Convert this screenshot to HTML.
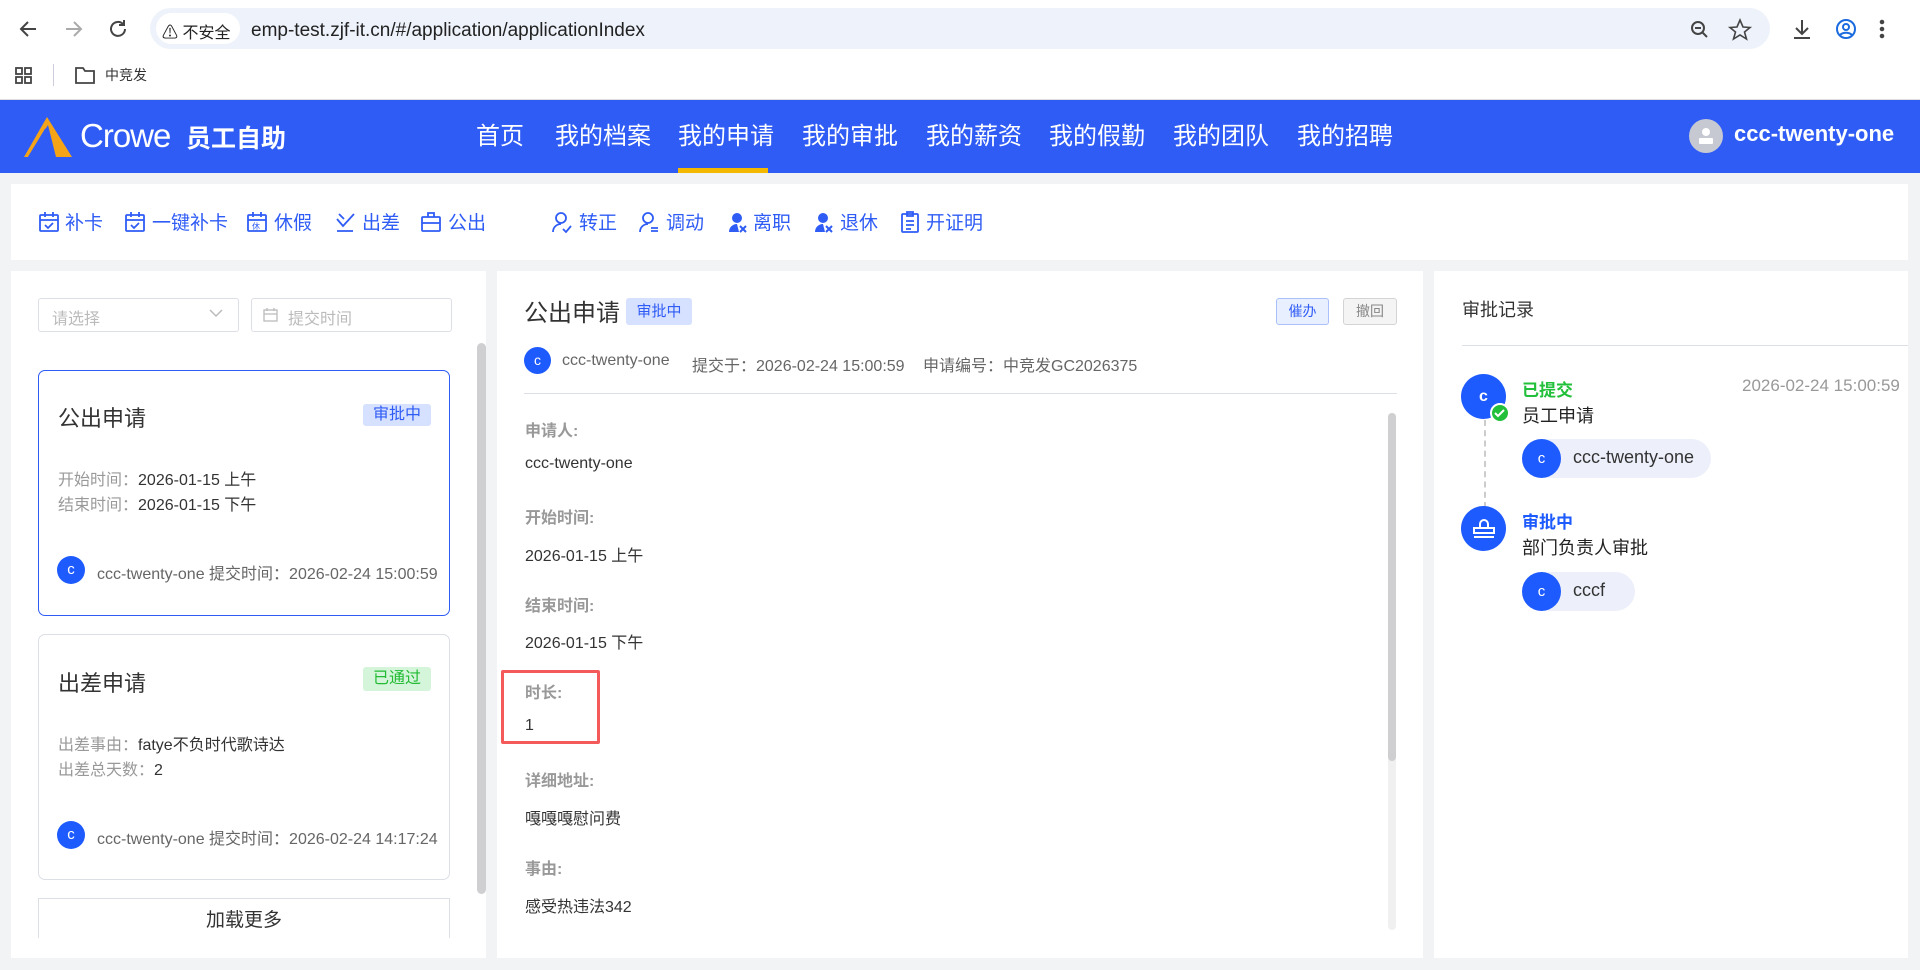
<!DOCTYPE html>
<html><head><meta charset="utf-8"><style>
*{margin:0;padding:0;box-sizing:border-box}
body{width:1920px;height:970px;overflow:hidden;background:#f2f3f5;font-family:"Liberation Sans","Noto Sans CJK SC",sans-serif;position:relative;color:#333}
.a{position:absolute;white-space:nowrap}
.nav{position:absolute;left:0;top:100px;width:1920px;height:73px;background:#2f5cf5}
.ni{position:absolute;top:116px;font-size:24px;color:#fff}
.tb{font-size:19px;color:#2f5cf5;top:208px}
.ic{position:absolute;top:211px}
.panel{position:absolute;background:#fff}
.lbl{position:absolute;left:525px;font-size:16px;color:#999;font-weight:bold}
.val{position:absolute;left:525px;font-size:16px;color:#333}
.av{position:absolute;border-radius:50%;background:#1e5bff;color:#fff;text-align:center;font-size:15px}
</style></head><body>
<!-- browser chrome -->
<div class="a" style="left:0;top:0;width:1920px;height:100px;background:#fff;border-bottom:1px solid #ddd"></div>
<svg class="a" style="left:16px;top:16px" width="120" height="26" viewBox="0 0 120 26" fill="none" stroke-width="2">
<path d="M20 13H6M12 6l-7 7 7 7" stroke="#444"/>
<path d="M50 13h14M58 6l7 7-7 7" stroke="#aaa"/>
<path d="M109 13a7 7 0 1 1-2-5" stroke="#444"/>
<path d="M108 4v5h-5" stroke="#444"/>
</svg>
<div class="a" style="left:150px;top:8px;width:1620px;height:41px;border-radius:21px;background:#eef2fa"></div>
<div class="a" style="left:156px;top:13px;width:84px;height:31px;border-radius:16px;background:#fff"></div>
<div class="a" style="left:162px;top:19px;font-size:16px;color:#222">⚠ 不安全</div>
<div class="a" style="left:251px;top:20px;font-size:19px;color:#222">emp-test.zjf-it.cn/#/application/applicationIndex</div>
<svg class="a" style="left:1688px;top:18px" width="200" height="24" viewBox="0 0 200 24" fill="none" stroke="#444" stroke-width="2">
<circle cx="10" cy="10" r="6"/><path d="M14 14l5 5M7 10h6"/>
<path d="M52 2l3 7 7 .5-5.5 4.5 2 7-6.5-4-6.5 4 2-7L42 9.5l7-.5z" stroke-width="1.6"/>
<path d="M114 2v13M108 10l6 6 6-6M106 20h16"/>
<circle cx="158" cy="11" r="9" stroke="#1a6be0"/><circle cx="158" cy="9" r="3" stroke="#1a6be0"/><path d="M152 17c3-3 9-3 12 0" stroke="#1a6be0"/>
<circle cx="194" cy="4" r="1.3" fill="#444"/><circle cx="194" cy="11" r="1.3" fill="#444"/><circle cx="194" cy="18" r="1.3" fill="#444"/>
</svg>
<svg class="a" style="left:14px;top:66px" width="20" height="20" fill="none" stroke="#444" stroke-width="1.8"><rect x="2" y="2" width="6" height="6"/><rect x="11" y="2" width="6" height="6"/><rect x="2" y="11" width="6" height="6"/><rect x="11" y="11" width="6" height="6"/></svg>
<div class="a" style="left:53px;top:64px;width:1px;height:22px;background:#ccd"></div>
<svg class="a" style="left:74px;top:65px" width="22" height="20" fill="none" stroke="#444" stroke-width="1.8"><path d="M2 3h7l2 3h9v12H2z"/></svg>
<div class="a" style="left:105px;top:65px;font-size:14px;color:#333">中竞发</div>
<!-- nav -->
<div class="nav"></div>
<svg class="a" style="left:22px;top:115px" width="52" height="44" viewBox="0 0 52 44"><path d="M25 2L2 42l4 0L26 10 34 42h16z" fill="#f5a418"/><path d="M7 42L24 14M13 42L26 20M19 42L28 26" stroke="#2f5cf5" stroke-width="2"/></svg>
<div class="a" style="left:80px;top:117px;font-size:33px;color:#fff;font-weight:300;letter-spacing:-1px">Crowe</div>
<div class="a" style="left:186px;top:119px;font-size:25px;color:#fff;font-weight:bold">员工自助</div>
<div class="ni" style="left:476px">首页</div>
<div class="ni" style="left:555px">我的档案</div>
<div class="ni" style="left:678px">我的申请</div>
<div class="a" style="left:678px;top:168px;width:90px;height:5px;background:#f5b800"></div>
<div class="ni" style="left:802px">我的审批</div>
<div class="ni" style="left:926px">我的薪资</div>
<div class="ni" style="left:1049px">我的假勤</div>
<div class="ni" style="left:1173px">我的团队</div>
<div class="ni" style="left:1297px">我的招聘</div>
<div class="a" style="left:1689px;top:119px;width:34px;height:34px;border-radius:50%;background:#c6c9d2"></div>
<svg class="a" style="left:1697px;top:126px" width="18" height="20"><circle cx="9" cy="6" r="4" fill="#fff"/><rect x="2" y="12" width="14" height="6" rx="1" fill="#fff"/></svg>
<div class="a" style="left:1734px;top:121px;font-size:22px;color:#fff;font-weight:bold">ccc-twenty-one</div>
<!-- toolbar -->
<div class="panel" style="left:11px;top:184px;width:1897px;height:76px"></div>
<svg class="ic" style="left:38px" width="22" height="22" fill="none" stroke="#2f5cf5" stroke-width="1.8"><rect x="2" y="4" width="18" height="16" rx="1"/><path d="M2 9h18M7 1v5M15 1v5M7 14l3 3 5-5"/></svg>
<div class="a tb" style="left:65px">补卡</div>
<svg class="ic" style="left:124px" width="22" height="22" fill="none" stroke="#2f5cf5" stroke-width="1.8"><rect x="2" y="4" width="18" height="16" rx="1"/><path d="M2 9h18M7 1v5M15 1v5M7 14l3 3 5-5"/></svg>
<div class="a tb" style="left:152px">一键补卡</div>
<svg class="ic" style="left:246px" width="22" height="22" fill="none" stroke="#2f5cf5" stroke-width="1.8"><rect x="2" y="4" width="18" height="16" rx="1"/><path d="M2 9h18M7 1v5M15 1v5"/><text x="6" y="18" font-size="8" fill="#2f5cf5" stroke="none">休</text></svg>
<div class="a tb" style="left:274px">休假</div>
<svg class="ic" style="left:334px" width="22" height="22" fill="none" stroke="#2f5cf5" stroke-width="1.8"><path d="M3 8l6 7L20 3M3 20h16M5 3l5 5"/></svg>
<div class="a tb" style="left:362px">出差</div>
<svg class="ic" style="left:420px" width="22" height="22" fill="none" stroke="#2f5cf5" stroke-width="1.8"><rect x="2" y="6" width="18" height="14" rx="1"/><path d="M8 6V2h6v4M2 12h18"/></svg>
<div class="a tb" style="left:448px">公出</div>
<svg class="ic" style="left:551px" width="22" height="22" fill="none" stroke="#2f5cf5" stroke-width="1.8"><circle cx="10" cy="7" r="5"/><path d="M2 21c0-5 4-8 8-8M12 18l3 3 5-6"/></svg>
<div class="a tb" style="left:579px">转正</div>
<svg class="ic" style="left:638px" width="22" height="22" fill="none" stroke="#2f5cf5" stroke-width="1.8"><circle cx="10" cy="7" r="5"/><path d="M2 21c0-5 4-8 8-8M13 17h7M13 20h7"/></svg>
<div class="a tb" style="left:666px">调动</div>
<svg class="ic" style="left:727px" width="22" height="22" fill="#2f5cf5"><circle cx="10" cy="7" r="5"/><path d="M2 21c0-5 4-8 8-8l2 8z"/><path d="M13 15l6 6M19 15l-6 6" stroke="#2f5cf5" stroke-width="2"/></svg>
<div class="a tb" style="left:753px">离职</div>
<svg class="ic" style="left:813px" width="22" height="22" fill="#2f5cf5"><circle cx="10" cy="7" r="5"/><path d="M2 21c0-5 4-8 8-8l2 8z"/><path d="M13 15l6 6M19 15l-6 6" stroke="#2f5cf5" stroke-width="2"/></svg>
<div class="a tb" style="left:840px">退休</div>
<svg class="ic" style="left:899px" width="22" height="22" fill="none" stroke="#2f5cf5" stroke-width="1.8"><rect x="3" y="3" width="16" height="18" rx="1"/><path d="M8 1h6v4H8zM7 10h8M7 14h8M7 18h5"/></svg>
<div class="a tb" style="left:926px">开证明</div>
<!-- left panel -->
<div class="panel" style="left:11px;top:271px;width:475px;height:687px"></div>
<div class="a" style="left:38px;top:298px;width:201px;height:34px;border:1px solid #dcdfe6;border-radius:3px"></div>
<div class="a" style="left:52px;top:305px;font-size:16px;color:#bbb">请选择</div>
<svg class="a" style="left:209px;top:308px" width="14" height="10" fill="none" stroke="#bbb" stroke-width="1.5"><path d="M1 2l6 6 6-6"/></svg>
<div class="a" style="left:251px;top:298px;width:201px;height:34px;border:1px solid #dcdfe6;border-radius:3px"></div>
<svg class="a" style="left:263px;top:308px" width="15" height="14" fill="none" stroke="#bbb" stroke-width="1.3"><rect x="1" y="2" width="13" height="11"/><path d="M1 6h13M4 0v3M11 0v3"/></svg>
<div class="a" style="left:288px;top:305px;font-size:16px;color:#bbb">提交时间</div>
<div class="a" style="left:477px;top:343px;width:9px;height:551px;border-radius:5px;background:#cfcfd1"></div>

<div class="a" style="left:38px;top:370px;width:412px;height:246px;border:1px solid #2f5cf5;border-radius:7px"></div>
<div class="a" style="left:58px;top:401px;font-size:22px;color:#333">公出申请</div>
<div class="a" style="left:363px;top:404px;width:68px;height:22px;background:#d6e0ff;border-radius:3px;color:#2f5cf5;font-size:16px;text-align:center;line-height:22px">审批中</div>
<div class="a" style="left:58px;top:466px;font-size:16px;color:#999">开始时间：<span style="color:#333">2026-01-15 上午</span></div>
<div class="a" style="left:58px;top:491px;font-size:16px;color:#999">结束时间：<span style="color:#333">2026-01-15 下午</span></div>
<div class="av" style="left:57px;top:556px;width:28px;height:28px;line-height:28px">c</div>
<div class="a" style="left:97px;top:560px;font-size:16px;color:#666">ccc-twenty-one 提交时间：2026-02-24 15:00:59</div>

<div class="a" style="left:38px;top:634px;width:412px;height:246px;border:1px solid #dcdfe6;border-radius:7px"></div>
<div class="a" style="left:58px;top:666px;font-size:22px;color:#333">出差申请</div>
<div class="a" style="left:363px;top:667px;width:68px;height:24px;background:#d4f5d9;border-radius:3px;color:#22bb33;font-size:16px;text-align:center;line-height:24px">已通过</div>
<div class="a" style="left:58px;top:731px;font-size:16px;color:#999">出差事由：<span style="color:#333">fatye不负时代歌诗达</span></div>
<div class="a" style="left:58px;top:756px;font-size:16px;color:#999">出差总天数：<span style="color:#333">2</span></div>
<div class="av" style="left:57px;top:821px;width:28px;height:28px;line-height:28px">c</div>
<div class="a" style="left:97px;top:825px;font-size:16px;color:#666">ccc-twenty-one 提交时间：2026-02-24 14:17:24</div>
<div class="a" style="left:38px;top:898px;width:412px;height:40px;border:1px solid #dcdfe6;border-bottom:none;text-align:center;font-size:19px;line-height:44px;color:#333">加载更多</div>

<!-- middle panel -->
<div class="panel" style="left:497px;top:271px;width:926px;height:687px"></div>
<div class="a" style="left:524px;top:293px;font-size:24px;color:#333">公出申请</div>
<div class="a" style="left:626px;top:298px;width:66px;height:27px;background:#d6e0ff;border-radius:3px;color:#2f5cf5;font-size:15px;text-align:center;line-height:27px">审批中</div>
<div class="a" style="left:1276px;top:298px;width:53px;height:27px;background:#e8efff;border:1px solid #a9c0fb;border-radius:3px;color:#2f5cf5;font-size:14px;text-align:center;line-height:25px">催办</div>
<div class="a" style="left:1343px;top:298px;width:54px;height:27px;background:#f4f4f5;border:1px solid #d3d4d6;border-radius:3px;color:#888;font-size:14px;text-align:center;line-height:25px">撤回</div>
<div class="av" style="left:524px;top:347px;width:27px;height:27px;line-height:27px;font-size:14px">c</div>
<div class="a" style="left:562px;top:352px;font-size:16px;color:#666">ccc-twenty-one</div>
<div class="a" style="left:692px;top:352px;font-size:16px;color:#666">提交于：2026-02-24 15:00:59</div>
<div class="a" style="left:923px;top:352px;font-size:16px;color:#666">申请编号：中竞发GC2026375</div>
<div class="a" style="left:524px;top:393px;width:873px;height:1px;background:#dcdfe6"></div>
<div class="a" style="left:1388px;top:413px;width:8px;height:517px;border-radius:4px;background:#f0f0f0"></div>
<div class="a" style="left:1388px;top:413px;width:8px;height:348px;border-radius:4px;background:#cfcfd1"></div>
<div class="lbl" style="top:417px">申请人:</div>
<div class="val" style="top:455px">ccc-twenty-one</div>
<div class="lbl" style="top:504px">开始时间:</div>
<div class="val" style="top:542px">2026-01-15 上午</div>
<div class="lbl" style="top:592px">结束时间:</div>
<div class="val" style="top:629px">2026-01-15 下午</div>
<div class="lbl" style="top:679px">时长:</div>
<div class="val" style="top:717px">1</div>
<div class="a" style="left:501px;top:670px;width:99px;height:74px;border:3px solid #f55a5a;border-radius:2px"></div>
<div class="lbl" style="top:767px">详细地址:</div>
<div class="val" style="top:805px">嘎嘎嘎慰问费</div>
<div class="lbl" style="top:855px">事由:</div>
<div class="val" style="top:893px">感受热违法342</div>

<!-- right panel -->
<div class="panel" style="left:1434px;top:271px;width:474px;height:687px"></div>
<div class="a" style="left:1462px;top:296px;font-size:18px;color:#333">审批记录</div>
<div class="a" style="left:1462px;top:345px;width:446px;height:1px;background:#dcdfe6"></div>
<div class="a" style="left:1484px;top:420px;width:0;height:88px;border-left:2px dashed #ccc"></div>
<div class="av" style="left:1461px;top:374px;width:45px;height:45px;line-height:45px;font-weight:bold;font-size:16px">c</div>
<div class="a" style="left:1490px;top:403px;width:20px;height:20px;border-radius:50%;background:#22c03a;border:2px solid #fff"></div>
<svg class="a" style="left:1494px;top:408px" width="12" height="10" fill="none" stroke="#fff" stroke-width="2"><path d="M1 5l3 3 6-6"/></svg>
<div class="a" style="left:1522px;top:376px;font-size:17px;color:#22c03a;font-weight:bold">已提交</div>
<div class="a" style="left:1742px;top:376px;font-size:17px;color:#999">2026-02-24 15:00:59</div>
<div class="a" style="left:1522px;top:402px;font-size:18px;color:#222">员工申请</div>
<div class="a" style="left:1522px;top:439px;width:189px;height:39px;border-radius:20px;background:#edf0fb"></div>
<div class="av" style="left:1522px;top:439px;width:39px;height:39px;line-height:39px">c</div>
<div class="a" style="left:1573px;top:447px;font-size:18px;color:#333">ccc-twenty-one</div>
<div class="av" style="left:1461px;top:506px;width:45px;height:45px"></div>
<svg class="a" style="left:1469px;top:514px" width="30" height="30" fill="none" stroke="#fff" stroke-width="2"><path d="M11 14V10a4 4 0 1 1 8 0v4M5 14h20v5H5zM5 23h20"/></svg>
<div class="a" style="left:1522px;top:508px;font-size:17px;color:#1e5bff;font-weight:bold">审批中</div>
<div class="a" style="left:1522px;top:534px;font-size:18px;color:#222">部门负责人审批</div>
<div class="a" style="left:1522px;top:572px;width:113px;height:39px;border-radius:20px;background:#edf0fb"></div>
<div class="av" style="left:1522px;top:572px;width:39px;height:39px;line-height:39px">c</div>
<div class="a" style="left:1573px;top:580px;font-size:18px;color:#333">cccf</div>
</body></html>
